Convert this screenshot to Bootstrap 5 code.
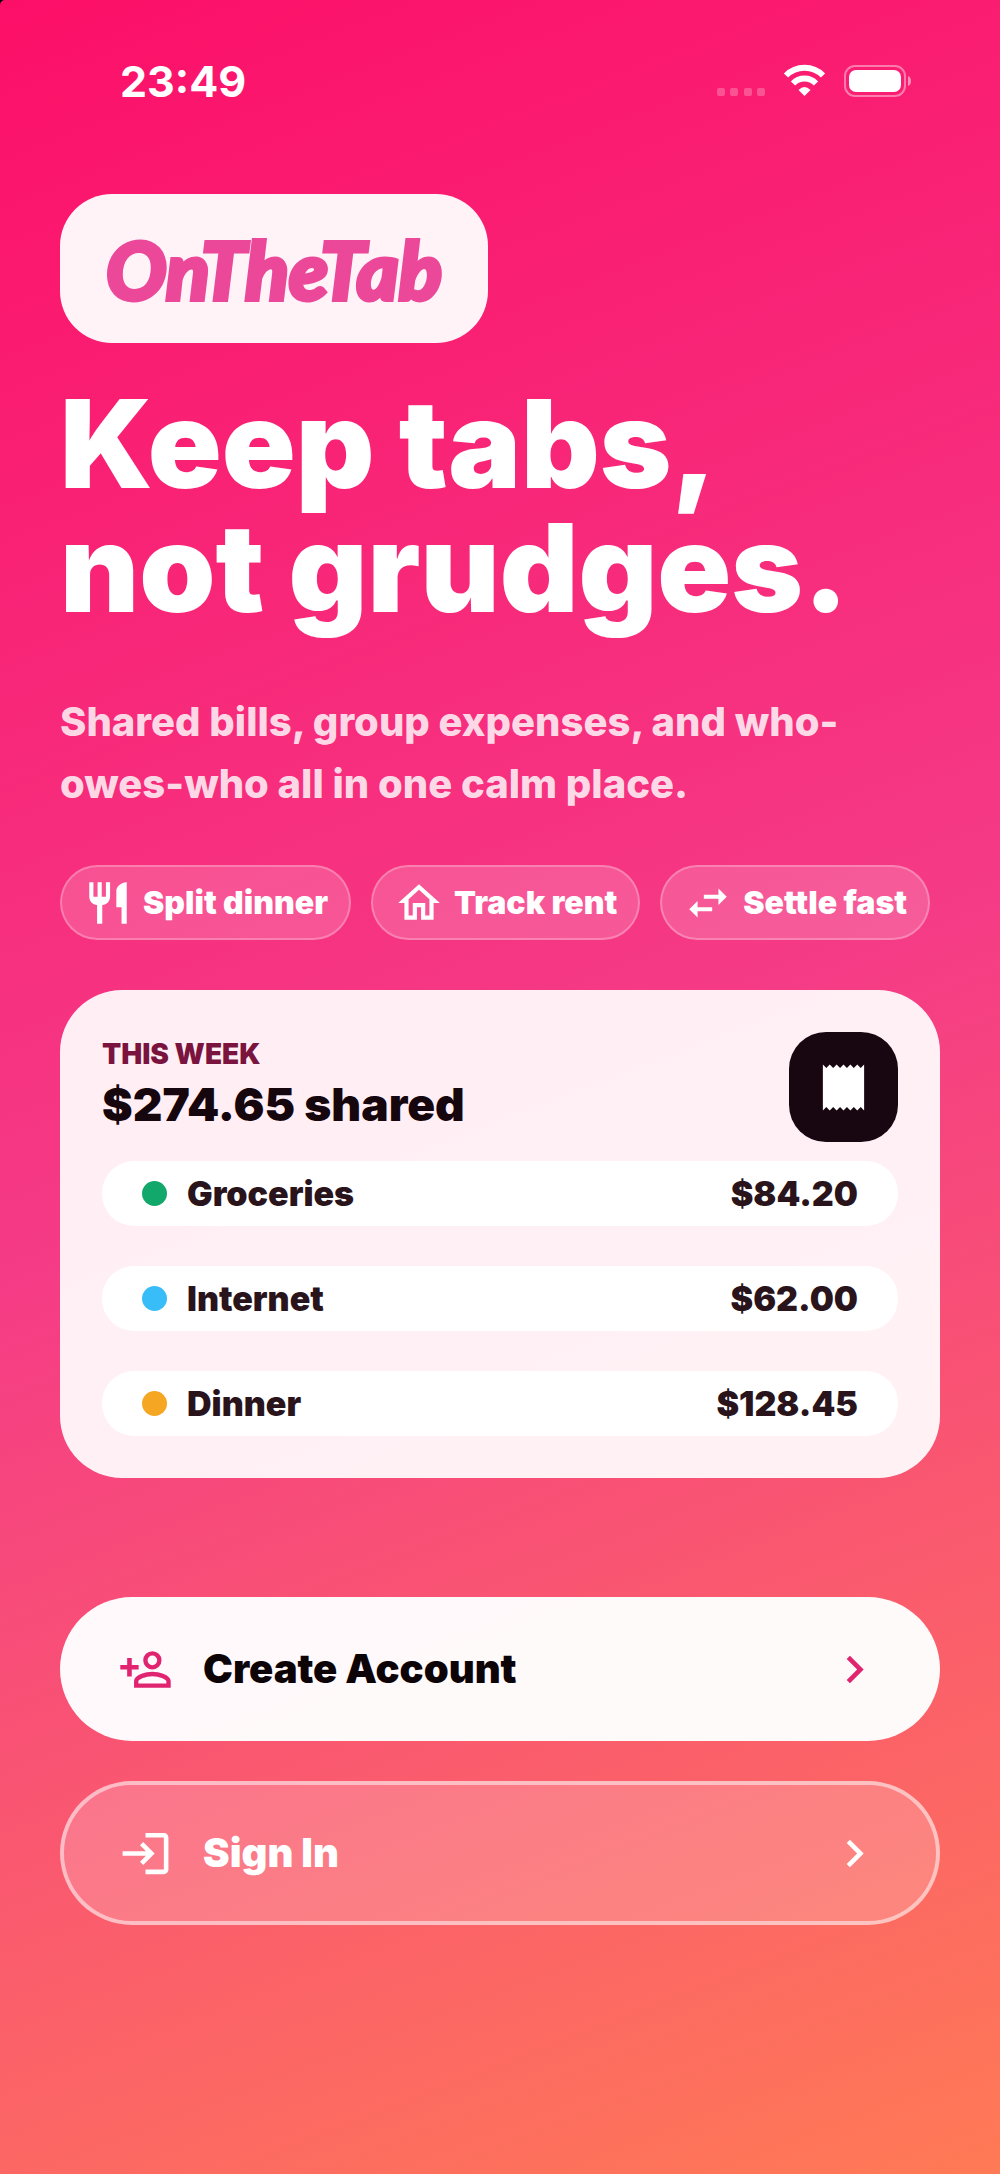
<!DOCTYPE html>
<html lang="en">
<head>
<meta charset="utf-8">
<meta name="viewport" content="width=device-width, initial-scale=1">
<title>OnTheTab</title>
<link href="https://cdn.jsdelivr.net/npm/bootstrap@5.3.0/dist/css/bootstrap.min.css" rel="stylesheet">
<style>
  body { background: #000; font-family: Inter, "Liberation Sans", sans-serif; color: #fff; }
  .app-screen {
    border-top-left-radius: 5px;
    padding: 0 60px 60px;
    background: linear-gradient(159deg, #fc0f68 0%, #f53b86 50%, #ff7a55 100%);
  }
  .app-screen svg { display: block; fill: currentColor; flex: none; }
  .status-bar { padding: 56px 28px 0 60px; height: 106px; }
  .status-time { font-size: 43px; line-height: 50px; font-weight: 700; }
  .brand-tile { margin-top: 88px; height: 149px; padding: 0 46px; border-radius: 52px; background: rgba(255,255,255,.95); }
  .brand-name { font-family: Lato, sans-serif; font-style: italic; font-weight: 900; font-size: 80px; line-height: 84px; color: #ec4899; -webkit-text-stroke: 4px #ec4899; stroke-linejoin: round; }
  .headline { margin: 39px 0 0; font-size: 122px; line-height: 124px; font-weight: 900; }
  .tagline { margin: 61px 0 0; padding-right: 40px; font-size: 40px; line-height: 62px; font-weight: 800; color: rgba(255,255,255,.84); }
  .feature-list { gap: 20px; margin: 50px 0 0; }
  .feature-chip { height: 75px; gap: 10px; padding: 0 21px; border: 2px solid rgba(255,255,255,.26); border-radius: 38px; background: rgba(255,255,255,.17); font-size: 32px; line-height: 36px; font-weight: 900; white-space: nowrap; }
  .week-card { margin-top: 50px; padding: 42px; border-radius: 62px; background: rgba(255,255,255,.92); color: #16060d; }
  .week-label { font-size: 28px; line-height: 34px; font-weight: 900; color: #7a143f; }
  .week-total { margin: 0; font-size: 46px; line-height: 66px; font-weight: 900; }
  .receipt-tile { width: 109px; height: 110px; border-radius: 37px; background: #180610; color: #fff; }
  .expense-list { gap: 40px; margin: 19px 0 0; }
  .expense-item { height: 65px; padding: 0 40px; border-radius: 32px; background: #fff; color: #2a141c; font-size: 34px; line-height: 40px; font-weight: 900; }
  .expense-dot { width: 25px; height: 25px; margin-right: 20px; border-radius: 50%; }
  .dot-groceries { background: #12a86b; }
  .dot-internet { background: #38bdf8; }
  .dot-dinner { background: #f5a623; }
  .action-list { gap: 40px; margin-top: 119px; }
  .action-btn { height: 144px; padding: 0 58px; gap: 30px; border: 0; border-radius: 72px; font-size: 40px; line-height: 48px; font-weight: 900; text-align: left; }
  .action-create { background: rgba(255,255,255,.97); color: #0d0408; }
  .action-create svg { color: #e02470; }
  .action-signin { padding: 0 54px; background: rgba(255,255,255,.19); background-clip: padding-box; border: 4px solid rgba(255,255,255,.6); color: #fff; }
</style>
</head>
<body>
<div class="app-screen min-vh-100">
  <header class="status-bar d-flex justify-content-between align-items-start">
    <span class="status-time">23:49</span>
    <svg width="196" height="50" viewBox="0 0 196 50" aria-hidden="true">
      <g opacity=".24"><rect x="1" y="32" width="8" height="8" rx="2"/><rect x="14" y="32" width="8" height="8" rx="2"/><rect x="28" y="32" width="8" height="8" rx="2"/><rect x="41" y="32" width="8" height="8" rx="2"/></g>
      <g fill="none" stroke="#fff" stroke-width="6"><path d="M70 19.500A26 26 0 0 1 107 19.500"/><path d="M77 27.500A16 16 0 0 1 100 27.500"/></g>
      <path d="M88.500 40l-6-6Q88.500 28 94.500 34z"/>
      <rect x="129" y="10" width="60" height="30" rx="10" fill="none" stroke="#fff" stroke-width="2" opacity=".42"/>
      <rect x="133" y="14" width="52" height="22" rx="7"/>
      <path d="M192 20q3 1 3 5t-3 5z" opacity=".5"/>
    </svg>
  </header>

  <main>
    <div class="brand-tile d-inline-flex align-items-center"><span class="brand-name">OnTheTab</span></div>
    <h1 class="headline">Keep tabs,<br>not grudges.</h1>
    <p class="tagline">Shared bills, group expenses, and who-owes-who all in one calm place.</p>

    <ul class="feature-list list-unstyled d-flex">
      <li class="feature-chip d-flex align-items-center"><svg width="50" height="50" viewBox="0 0 24 24" aria-hidden="true"><path d="M11 9H9V2H7v7H5V2H3v7c0 2.120 1.660 3.840 3.750 3.970V22h2.500v-9.030C11.340 12.840 13 11.120 13 9V2h-2v7zm5-3v8h2.500v8H21V2c-2.760 0-5 2.240-5 4z"/></svg>Split dinner</li>
      <li class="feature-chip d-flex align-items-center"><svg width="50" height="50" viewBox="0 0 24 24" aria-hidden="true"><path d="M12 5.690l5 4.500V18h-2v-6H9v6H7v-7.810l5-4.500M12 3L2 12h3v8h6v-6h2v6h6v-8h3L12 3z"/></svg>Track rent</li>
      <li class="feature-chip d-flex align-items-center"><svg width="50" height="50" viewBox="0 0 24 24" aria-hidden="true"><path d="M6.990 11L3 15l3.990 4v-3H14v-2H6.990v-3zM21 9l-3.990-4v3H10v2h7.010v3L21 9z"/></svg>Settle fast</li>
    </ul>

    <section class="week-card">
      <div class="d-flex justify-content-between align-items-center">
        <div>
          <div class="week-label">THIS WEEK</div>
          <h2 class="week-total">$274.65 shared</h2>
        </div>
        <div class="receipt-tile d-flex align-items-center justify-content-center">
          <svg width="55" height="55" viewBox="0 0 24 24" aria-hidden="true"><path d="M3 22l1.500-1.500L6 22l1.500-1.500L9 22l1.500-1.500L12 22l1.500-1.500L15 22l1.500-1.500L18 22l1.500-1.500L21 22V2l-1.500 1.500L18 2l-1.500 1.500L15 2l-1.500 1.500L12 2l-1.500 1.500L9 2 7.500 3.500 6 2 4.500 3.500 3 2v20z"/></svg>
        </div>
      </div>
      <ul class="expense-list list-unstyled d-flex flex-column">
        <li class="expense-item d-flex align-items-center"><span class="expense-dot dot-groceries"></span><span>Groceries</span><span class="ms-auto">$84.20</span></li>
        <li class="expense-item d-flex align-items-center"><span class="expense-dot dot-internet"></span><span>Internet</span><span class="ms-auto">$62.00</span></li>
        <li class="expense-item d-flex align-items-center"><span class="expense-dot dot-dinner"></span><span>Dinner</span><span class="ms-auto">$128.45</span></li>
      </ul>
    </section>

    <div class="action-list d-flex flex-column">
      <button type="button" class="action-btn action-create d-flex align-items-center">
        <svg width="55" height="55" viewBox="0 0 24 24" aria-hidden="true"><path d="M15 4a4 4 0 0 0-4 4 4 4 0 0 0 4 4 4 4 0 0 0 4-4 4 4 0 0 0-4-4m0 1.900A2.100 2.100 0 1 1 12.900 8 2.100 2.100 0 0 1 15 5.900M4 7v3H1v2h3v3h2v-3h3v-2H6V7H4m11 6c-2.670 0-8 1.330-8 4v3h16v-3c0-2.670-5.330-4-8-4m0 1.900c2.970 0 6.100 1.460 6.100 2.100v1.100H8.900V17c0-.640 3.100-2.100 6.100-2.100z"/></svg>
        <span class="flex-grow-1">Create Account</span>
        <svg width="55" height="55" viewBox="0 0 24 24" aria-hidden="true"><path d="M10 6L8.590 7.410 13.170 12l-4.580 4.590L10 18l6-6z"/></svg>
      </button>
      <button type="button" class="action-btn action-signin d-flex align-items-center">
        <svg width="55" height="55" viewBox="0 0 24 24" aria-hidden="true"><path d="M11 7L9.600 8.400l2.600 2.600H2v2h10.200l-2.600 2.600L11 17l5-5-5-5zm9 12h-8v2h8c1.100 0 2-.9 2-2V5c0-1.100-.9-2-2-2h-8v2h8v14z"/></svg>
        <span class="flex-grow-1">Sign In</span>
        <svg width="55" height="55" viewBox="0 0 24 24" aria-hidden="true"><path d="M10 6L8.590 7.410 13.170 12l-4.580 4.590L10 18l6-6z"/></svg>
      </button>
    </div>
  </main>
</div>
<script src="https://cdn.jsdelivr.net/npm/bootstrap@5.3.0/dist/js/bootstrap.bundle.min.js"></script>
</body>
</html>
